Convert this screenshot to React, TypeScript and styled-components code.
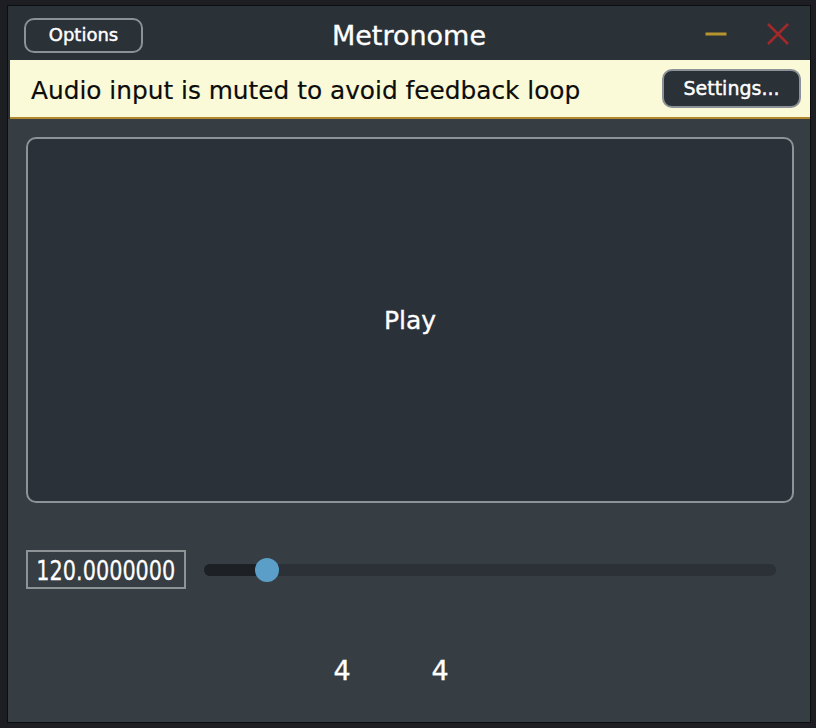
import React from "react";
import styled, { createGlobalStyle } from "styled-components";

const GlobalStyle = createGlobalStyle`
  html, body {
    margin: 0;
    padding: 0;
    background: #1d1e21;
    font-family: "DejaVu Sans", "Liberation Sans", sans-serif;
  }
  * { box-sizing: border-box; }
`;

const Page = styled.div`
  width: 816px;
  height: 728px;
  padding: 5px 0 0 7px;
  background: #1d1e21;
`;

const Window = styled.div`
  width: 804px;
  height: 718px;
  border: 1px solid #0c0d0e;
  background: #363d43;
  display: flex;
  flex-direction: column;
  overflow: hidden;
`;

const Header = styled.div`
  background: #2a3137;
  display: flex;
  flex-direction: column;
`;

const TitleBar = styled.div`
  height: 54px;
  display: grid;
  grid-template-columns: 1fr auto 1fr;
  align-items: center;
`;

const TitleLeft = styled.div`
  display: flex;
  align-items: center;
  padding-left: 16px;
  padding-top: 4px;
`;

const TitleRight = styled.div`
  display: flex;
  justify-content: flex-end;
  align-items: center;
  gap: 40px;
  padding-right: 21px;
  padding-top: 2px;
`;

const Title = styled.div`
  color: #ffffff;
  font-size: 27px;
  line-height: 1;
  padding-top: 4px;
  -webkit-text-stroke: 0.35px #ffffff;
`;

const PillButton = styled.button<{ $w: number; $h: number; $fs: number }>`
  width: ${(p) => p.$w}px;
  height: ${(p) => p.$h}px;
  border: 2px solid #8b9196;
  border-radius: 10px;
  background: #2a3137;
  color: #ffffff;
  font-family: "DejaVu Sans", sans-serif;
  font-size: ${(p) => p.$fs}px;
  -webkit-text-stroke: 0.45px #ffffff;
  padding: 0;
  display: flex;
  align-items: center;
  justify-content: center;
  line-height: 1;
`;

const IconBox = styled.div`
  width: 22px;
  height: 22px;
  display: flex;
`;

const Banner = styled.div`
  margin-left: 2px;
  height: 59px;
  background: #fbfad8;
  border-bottom: 2px solid #b2882c;
  display: flex;
  align-items: center;
  justify-content: space-between;
  padding: 0 9px 0 21px;
`;

const BannerText = styled.span`
  color: #0c0c0c;
  font-size: 24.8px;
  line-height: 1;
  padding-top: 5px;
  -webkit-text-stroke: 0.2px #0c0c0c;
`;

const Body = styled.div`
  flex: 1;
  display: flex;
  flex-direction: column;
  padding: 18px 16px 0 18px;
`;

const PlayPanel = styled.div`
  height: 366px;
  border: 2px solid #8e9396;
  border-radius: 10px;
  background: #2b3138;
  display: flex;
  align-items: center;
  justify-content: center;
  color: #ffffff;
  font-size: 25px;
  -webkit-text-stroke: 0.35px #ffffff;
`;

const SliderRow = styled.div`
  margin-top: 47px;
  display: flex;
  align-items: center;
  gap: 18px;
  padding-right: 18px;
`;

const ValueField = styled.div`
  width: 160px;
  height: 39px;
  border: 2px solid #8e9396;
  display: flex;
  align-items: center;
  justify-content: center;
  overflow: hidden;
`;

const ValueText = styled.span`
  display: inline-block;
  color: #ffffff;
  font-size: 26px;
  line-height: 1;
  transform: scaleX(0.8);
  white-space: nowrap;
  padding-top: 2px;
  -webkit-text-stroke: 0.3px #ffffff;
`;

const Track = styled.div`
  position: relative;
  flex: 1;
  height: 12px;
  border-radius: 6px;
  background: #2b3137;
  margin-top: 1px;
`;

const TrackFill = styled.div`
  height: 100%;
  border-radius: 6px;
  background: #1d2125;
`;

const Thumb = styled.div`
  position: absolute;
  top: 50%;
  width: 24px;
  height: 24px;
  margin-top: -12px;
  margin-left: -12px;
  border-radius: 50%;
  background: #5b9fc8;
`;

const NumberRow = styled.div`
  margin-top: 61px;
  display: flex;
  padding-left: 267px;
`;

const NumberCell = styled.div`
  width: 98px;
  height: 40px;
  display: flex;
  align-items: center;
  justify-content: center;
  color: #ffffff;
  font-size: 27px;
  line-height: 1;
  -webkit-text-stroke: 0.35px #ffffff;
`;

const MinimizeIcon = () => (
  <IconBox>
    <svg width="22" height="22" viewBox="0 0 22 22">
      <line x1="0.5" y1="11" x2="21.5" y2="11" stroke="#b8942f" strokeWidth="3" />
    </svg>
  </IconBox>
);

const CloseIcon = () => (
  <IconBox>
    <svg width="22" height="22" viewBox="0 0 22 22">
      <path d="M1 1 L21 21 M21 1 L1 21" stroke="#a1292a" strokeWidth="2.6" fill="none" />
    </svg>
  </IconBox>
);

const Slider: React.FC<{ value: number; min: number; max: number; trackWidth: number }> = ({
  value,
  min,
  max,
  trackWidth,
}) => {
  const r = 12;
  const prop = (value - min) / (max - min);
  const pos = r + prop * (trackWidth - 2 * r);
  return (
    <Track>
      <TrackFill style={{ width: pos }} />
      <Thumb style={{ left: pos }} />
    </Track>
  );
};

export default function App() {
  const bpm = 120;
  return (
    <>
      <GlobalStyle />
      <Page>
        <Window>
          <Header>
            <TitleBar>
              <TitleLeft>
                <PillButton $w={119} $h={35} $fs={18}>
                  Options
                </PillButton>
              </TitleLeft>
              <Title>Metronome</Title>
              <TitleRight>
                <MinimizeIcon />
                <CloseIcon />
              </TitleRight>
            </TitleBar>
            <Banner>
              <BannerText>Audio input is muted to avoid feedback loop</BannerText>
              <PillButton $w={139} $h={39} $fs={19}>
                Settings...
              </PillButton>
            </Banner>
          </Header>
          <Body>
            <PlayPanel>Play</PlayPanel>
            <SliderRow>
              <ValueField>
                <ValueText>{bpm.toFixed(7)}</ValueText>
              </ValueField>
              <Slider value={bpm} min={40} max={900} trackWidth={572} />
            </SliderRow>
            <NumberRow>
              <NumberCell>4</NumberCell>
              <NumberCell>4</NumberCell>
            </NumberRow>
          </Body>
        </Window>
      </Page>
    </>
  );
}
